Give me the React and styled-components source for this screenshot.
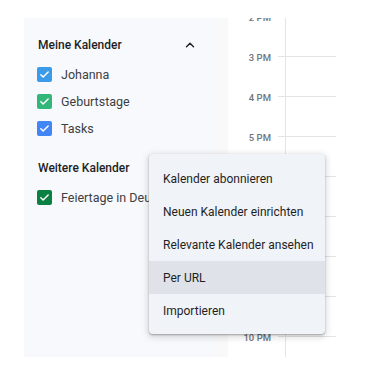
import styled, { createGlobalStyle } from "styled-components"

const Global = createGlobalStyle`
  body {
    margin: 0;
    background: #ffffff;
    font-family: Roboto, "Noto Sans", Arial, sans-serif;
  }
`

const calendars = [
    { name: "Johanna", color: "#3b9be8" },
    { name: "Geburtstage", color: "#33b679" },
    { name: "Tasks", color: "#4285f4" },
]

const hours = ["2 PM", "3 PM", "4 PM", "5 PM", "6 PM", "7 PM", "8 PM", "9 PM", "10 PM"]

const menuItems = [
    "Kalender abonnieren",
    "Neuen Kalender einrichten",
    "Relevante Kalender ansehen",
    "Per URL",
    "Importieren",
]

function Check({ color }) {
    return (
        <Box $color={color}>
            <svg width="11" height="11" viewBox="0 0 24 24">
                <path d="M4 12.5l5 5L20 6.5" fill="none" stroke="#fff" strokeWidth="3.2" strokeLinecap="round" strokeLinejoin="round" />
            </svg>
        </Box>
    )
}

function App() {
    return (
        <>
            <Global />
            <Panel>
                <Sidebar>
                    <Title>
                        Meine Kalender
                        <svg width="14" height="14" viewBox="0 0 24 24">
                            <path d="M6 15l6-6 6 6" fill="none" stroke="#1f1f1f" strokeWidth="2.4" strokeLinecap="round" strokeLinejoin="round" />
                        </svg>
                    </Title>
                    {calendars.map((c) => (
                        <Row key={c.name}>
                            <Check color={c.color} />
                            <span>{c.name}</span>
                        </Row>
                    ))}

                    <Title $gap>Weitere Kalender</Title>
                    <Row>
                        <Check color="#0b8043" />
                        <span>Feiertage in Deutschland</span>
                    </Row>
                </Sidebar>

                <Strip />

                <TimeArea>
                    {hours.map((h) => (
                        <HourRow key={h}>
                            <HourLabel>{h}</HourLabel>
                            <Tick />
                            <DayCell />
                        </HourRow>
                    ))}
                </TimeArea>

                <Menu>
                    {menuItems.map((m) => (
                        <MenuItem key={m} $active={m === "Per URL"}>{m}</MenuItem>
                    ))}
                </Menu>
            </Panel>
        </>
    )
}
export default App;



const Panel = styled.div`
  position: relative;
  display: flex;
  margin: 18px 0 0 24px;
  width: 312px;
  height: 339px;
  overflow: hidden;
`

const Sidebar = styled.div`
  width: 192px;
  flex: none;
  background: #f8f9fd;
  padding: 12px 0 0 14px;
  box-sizing: border-box;
  white-space: nowrap;
  overflow: hidden;
`

const Title = styled.div`
  display: flex;
  align-items: center;
  justify-content: space-between;
  height: 30px;
  margin: ${(p) => (p.$gap ? "11px" : "0")} 0 1px;
  padding-right: 19px;
  font-size: 12px;
  font-weight: 500;
  color: #1f1f1f;
`

const Row = styled.div`
  display: flex;
  align-items: center;
  gap: 9px;
  height: 27px;
  margin-left: -1px;
  font-size: 12.5px;
  color: #3c4043;
`

const Box = styled.div`
  width: 15px;
  height: 15px;
  flex: none;
  border-radius: 2px;
  background: ${(p) => p.$color};
  display: flex;
  align-items: center;
  justify-content: center;
`

const Strip = styled.div`
  width: 12px;
  flex: none;
  background: #f9f9f9;
`

const TimeArea = styled.div`
  flex: 1;
  background: #ffffff;
  margin-top: -2px;
`

const HourRow = styled.div`
  display: flex;
  height: 40px;
`

const HourLabel = styled.div`
  width: 43px;
  margin-right: 7px;
  margin-top: -4px;
  text-align: right;
  font-size: 9.5px;
  line-height: 12px;
  font-weight: 500;
  color: #70757a;
`

const Tick = styled.div`
  width: 7px;
  border-top: 1px solid #e3e3e8;
`

const DayCell = styled.div`
  flex: 1;
  border-top: 1px solid #e3e3e8;
  border-left: 1px solid #e3e3e8;
`

const Menu = styled.div`
  position: absolute;
  left: 125px;
  top: 136px;
  width: 176px;
  padding: 8px 0 7px;
  background: #f0f3f8;
  border-radius: 4px;
  box-shadow: 0 1px 2px rgba(0, 0, 0, 0.3), 0 2px 6px 2px rgba(0, 0, 0, 0.12);
`

const MenuItem = styled.div`
  height: 33px;
  display: flex;
  align-items: center;
  padding-left: 14px;
  font-size: 12px;
  color: #1f1f1f;
  background: ${(p) => (p.$active ? "#dfe3e9" : "transparent")};
`
